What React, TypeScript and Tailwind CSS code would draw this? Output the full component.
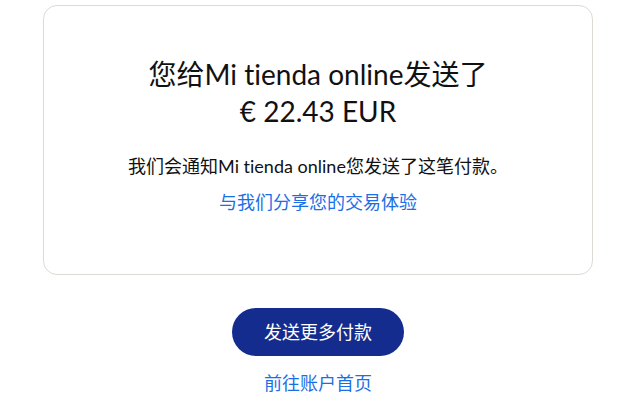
const font = { fontFamily: '"Lato", "Noto Sans CJK SC", sans-serif' }

export default function App() {
  return (
    <div className="min-h-[410px] bg-white text-[#111111] [font-variant-ligatures:none]" style={font}>
      <div className="ml-[43px] w-[550px] pt-[5px] flex flex-col items-center">
        <div className="w-full rounded-[14px] border border-[#dcdad3] pt-[50px] pb-[58px] flex flex-col items-center text-center">
          <h1 className="text-[28px] leading-[37px] font-normal">
            您给Mi tienda online发送了
            <br />€ 22.43 EUR
          </h1>
          <p className="mt-[23px] text-[18px] leading-[27px]">我们会通知Mi tienda online您发送了这笔付款。</p>
          <a className="mt-[9px] text-[18px] leading-[27px] text-[#1a6fe6]" href="#">
            与我们分享您的交易体验
          </a>
        </div>
        <button className="mt-[33px] h-[48px] w-[172px] rounded-full bg-[#142c8e] text-white text-[18px]">
          发送更多付款
        </button>
        <a className="mt-[14px] text-[18px] leading-[27px] text-[#1a6fe6]" href="#">
          前往账户首页
        </a>
      </div>
    </div>
  )
}
